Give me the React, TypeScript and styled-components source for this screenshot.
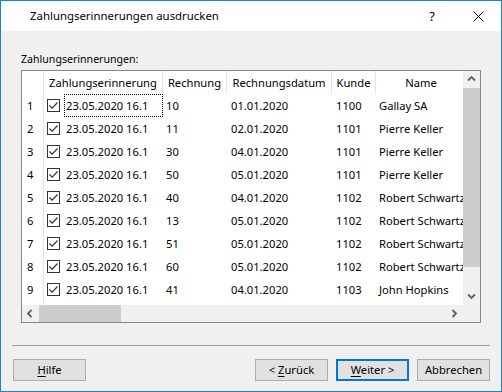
import React from "react";
import styled, { createGlobalStyle, css } from "styled-components";

const Global = createGlobalStyle`
  html, body { margin: 0; padding: 0; background: #ffffff; }
  body { font-family: "Noto Sans", "Open Sans", sans-serif; color: #000; }
  * { box-sizing: border-box; }
`;

const FONT = `"Noto Sans", "Open Sans", sans-serif`;

const Window = styled.div`
  width: 502px;
  height: 392px;
  border: 1px solid #1883d7;
  display: flex;
  flex-direction: column;
  background: #f0f0f0;
  font-family: ${FONT};
`;

const TitleBar = styled.div`
  height: 30px;
  background: #ffffff;
  display: flex;
  align-items: center;
  padding-left: 29px;
  flex-shrink: 0;
`;

const Title = styled.div`
  flex: 1;
  font-size: 11.4px;
  color: #000;
  padding-bottom: 1px;
`;

const TitleButton = styled.div<{ $w: number }>`
  width: ${(p) => p.$w}px;
  height: 30px;
  display: flex;
  align-items: center;
  justify-content: center;
  font-size: 13px;
  color: #000;
`;

const Body = styled.div`
  flex: 1;
  display: flex;
  flex-direction: column;
  padding: 0 11px;
`;

const Section = styled.div`
  padding: 0 9px;
  display: flex;
  flex-direction: column;
`;

const Label = styled.div`
  font-size: 10.6px;
  margin-top: 20px;
  height: 19px;
  line-height: 16px;
`;

const GridBox = styled.div`
  width: 460px;
  height: 253px;
  border: 1px solid #828790;
  display: grid;
  grid-template-columns: 441px 17px;
  grid-template-rows: 234px 17px;
  background: #f0f0f0;
`;

const Content = styled.div`
  background: #fff;
  overflow: hidden;
`;

const Table = styled.div`
  display: grid;
  grid-template-columns: 22px 20px 99px 64px 105px 44px 90px;
  grid-auto-rows: 23px;
  font-size: 11.2px;
  width: 444px;
`;

const HeadCell = styled.div<{ $span?: number; $sep?: boolean }>`
  grid-column: span ${(p) => p.$span ?? 1};
  display: flex;
  align-items: center;
  justify-content: center;
  white-space: nowrap;
  overflow: hidden;
  ${(p) => p.$sep && css`border-right: 1px solid #e5e5e5;`}
  padding-bottom: 1px;
`;

const RowHead = styled.div`
  border-right: 1px solid #e3e3e3;
  display: flex;
  align-items: center;
  padding-left: 5px;
`;

const Cell = styled.div<{ $pad?: number; $focus?: boolean }>`
  display: flex;
  align-items: center;
  padding-left: ${(p) => p.$pad ?? 4}px;
  white-space: nowrap;
  overflow: hidden;
  ${(p) =>
    p.$focus
      ? css`border: 1px dotted #000; padding-left: ${(p.$pad ?? 4) - 1}px;`
      : ""}
`;

const CheckCell = styled.div`
  display: flex;
  align-items: center;
  padding-left: 3px;
`;

const Check = styled.div`
  width: 13px;
  height: 13px;
  border: 1px solid #333;
  background: #fff;
  display: flex;
  align-items: center;
  justify-content: center;
`;

const VScroll = styled.div`
  display: grid;
  grid-template-rows: 17px 179px 1fr 17px;
  background: #f0f0f0;
`;

const HScroll = styled.div`
  display: grid;
  grid-template-columns: 17px 82px 1fr 17px;
  background: #f0f0f0;
`;

const Corner = styled.div`
  background: #f0f0f0;
`;

const Arrow = styled.div`
  display: flex;
  align-items: center;
  justify-content: center;
`;

const Thumb = styled.div`
  background: #cdcdcd;
`;

const Separator = styled.div`
  margin-top: 22px;
  height: 1px;
  background: #a0a0a0;
`;

const Buttons = styled.div`
  margin-top: 13px;
  display: flex;
  gap: 8px;
  padding-left: 1px;
`;

const Spacer = styled.div`
  flex: 1;
`;

const Button = styled.div<{ $default?: boolean }>`
  width: 73px;
  height: 22px;
  background: #e1e1e1;
  border: 1px solid #adadad;
  display: flex;
  align-items: center;
  justify-content: center;
  font-size: 11.2px;
  padding-bottom: 1px;
  ${(p) =>
    p.$default &&
    css`
      border: 2px solid #0078d7;
    `}
  u { text-decoration: underline; text-underline-offset: 2px; }
`;

const Chevron = ({ dir }: { dir: "up" | "down" | "left" | "right" }) => {
  const paths: Record<string, string> = {
    up: "M1 5.5 L4.5 2 L8 5.5",
    down: "M1 2.5 L4.5 6 L8 2.5",
    left: "M5.5 1 L2 4.5 L5.5 8",
    right: "M2.5 1 L6 4.5 L2.5 8",
  };
  return (
    <svg width="9" height="9" viewBox="0 0 9 9">
      <path d={paths[dir]} fill="none" stroke="#606060" strokeWidth="1.8" />
    </svg>
  );
};

const CheckMark = () => (
  <svg width="11" height="11" viewBox="0 0 11 11">
    <path d="M1.5 5.5 L4.2 8.2 L9.5 2.5" fill="none" stroke="#333" strokeWidth="1.2" />
  </svg>
);

const rows = [
  ["10", "01.01.2020", "1100", "Gallay SA"],
  ["11", "02.01.2020", "1101", "Pierre Keller"],
  ["30", "04.01.2020", "1101", "Pierre Keller"],
  ["50", "05.01.2020", "1101", "Pierre Keller"],
  ["40", "04.01.2020", "1102", "Robert Schwartz"],
  ["13", "05.01.2020", "1102", "Robert Schwartz"],
  ["51", "05.01.2020", "1102", "Robert Schwartz"],
  ["60", "05.01.2020", "1102", "Robert Schwartz"],
  ["41", "04.01.2020", "1103", "John Hopkins"],
];

export default function App() {
  return (
    <>
      <Global />
      <Window>
        <TitleBar>
          <Title>Zahlungserinnerungen ausdrucken</Title>
          <TitleButton $w={46}>?</TitleButton>
          <TitleButton $w={46}>
            <svg width="11" height="11" viewBox="0 0 11 11">
              <path d="M0.5 0.5 L10.5 10.5 M10.5 0.5 L0.5 10.5" stroke="#000" strokeWidth="1" />
            </svg>
          </TitleButton>
        </TitleBar>
        <Body>
          <Section>
            <Label>Zahlungserinnerungen:</Label>
            <GridBox>
              <Content>
                <Table>
                  <RowHead />
                  <HeadCell $span={2} $sep>Zahlungserinnerung</HeadCell>
                  <HeadCell $sep>Rechnung</HeadCell>
                  <HeadCell $sep>Rechnungsdatum</HeadCell>
                  <HeadCell $sep>Kunde</HeadCell>
                  <HeadCell>Name</HeadCell>
                  {rows.map((r, i) => (
                    <React.Fragment key={i}>
                      <RowHead>{i + 1}</RowHead>
                      <CheckCell>
                        <Check>
                          <CheckMark />
                        </Check>
                      </CheckCell>
                      <Cell $pad={2} $focus={i === 0}>23.05.2020 16.1</Cell>
                      <Cell $pad={3}>{r[0]}</Cell>
                      <Cell $pad={4}>{r[1]}</Cell>
                      <Cell $pad={4}>{r[2]}</Cell>
                      <Cell $pad={3}>{r[3]}</Cell>
                    </React.Fragment>
                  ))}
                  <RowHead />
                </Table>
              </Content>
              <VScroll>
                <Arrow>
                  <Chevron dir="up" />
                </Arrow>
                <Thumb />
                <div />
                <Arrow>
                  <Chevron dir="down" />
                </Arrow>
              </VScroll>
              <HScroll>
                <Arrow>
                  <Chevron dir="left" />
                </Arrow>
                <Thumb />
                <div />
                <Arrow>
                  <Chevron dir="right" />
                </Arrow>
              </HScroll>
              <Corner />
            </GridBox>
          </Section>
          <Separator />
          <Buttons>
            <Button>
              <span>
                <u>H</u>ilfe
              </span>
            </Button>
            <Spacer />
            <Button>
              <span>
                &lt; <u>Z</u>urück
              </span>
            </Button>
            <Button $default>
              <span>
                <u>W</u>eiter &gt;
              </span>
            </Button>
            <Button>Abbrechen</Button>
          </Buttons>
        </Body>
      </Window>
    </>
  );
}
